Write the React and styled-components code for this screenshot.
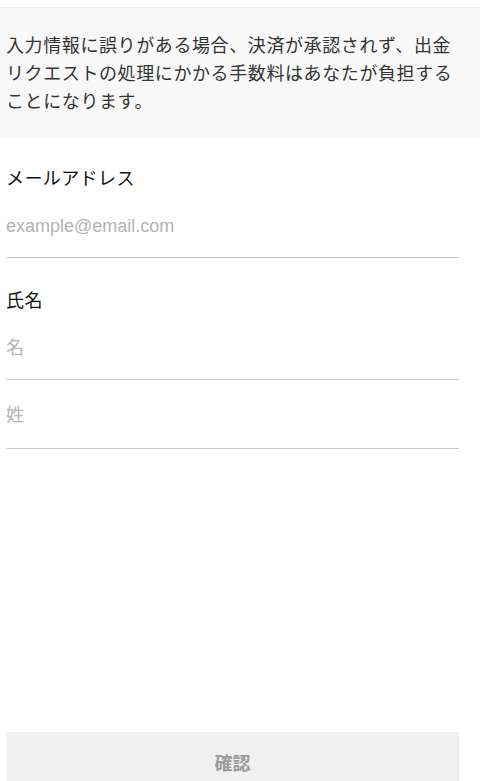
import React from "react";
import styled, { createGlobalStyle } from "styled-components";

const GlobalStyle = createGlobalStyle`
  html, body {
    margin: 0;
    padding: 0;
    background: #fff;
    font-family: "Liberation Sans", "Noto Sans CJK JP", sans-serif;
  }
`;

const Page = styled.div`
  height: 781px;
  overflow: hidden;
  display: flex;
  flex-direction: column;
  padding-top: 7px;
  box-sizing: border-box;
`;

const Notice = styled.div`
  background: #f8f8f8;
  border-top: 1px solid #ececec;
  padding: 24px 21px 21px 6px;
  font-size: 18px;
  line-height: 28px;
  color: #333;
  letter-spacing: 0.6px;
`;

const Form = styled.form`
  display: flex;
  flex-direction: column;
  padding: 28px 21px 0 6px;
  flex: 1;
`;

const Label = styled.label`
  font-size: 18px;
  line-height: 28px;
  color: #111;
  letter-spacing: 0.4px;
  margin-top: ${(props) => (props.first ? "0" : "29px")};
`;

const Input = styled.input`
  box-sizing: border-box;
  height: ${(props) => props.h || 65}px;
  border: none;
  border-bottom: 1px solid #c8c8c8;
  outline: none;
  padding: 3px 0 0;
  font-family: inherit;
  font-size: 18px;
  color: #333;
  background: transparent;

  &::placeholder {
    color: #b3b3b3;
  }
`;

const Submit = styled.button`
  margin-top: auto;
  margin-bottom: -11px;
  height: 60px;
  border: none;
  background: #f0f0f0;
  color: #9a9a9a;
  font-family: inherit;
  font-size: 18px;
  font-weight: 700;
  cursor: pointer;
`;

const App = () => (
  <Page>
    <GlobalStyle />
    <Notice>
      入力情報に誤りがある場合、決済が承認されず、出金リクエストの処理にかかる手数料はあなたが負担することになります。
    </Notice>
    <Form onSubmit={(e) => e.preventDefault()}>
      <Label first>メールアドレス</Label>
      <Input type="email" placeholder="example@email.com" />
      <Label>氏名</Label>
      <Input type="text" placeholder="名" />
      <Input type="text" placeholder="姓" h={69} />
      <Submit type="submit">確認</Submit>
    </Form>
  </Page>
);

export default App;
